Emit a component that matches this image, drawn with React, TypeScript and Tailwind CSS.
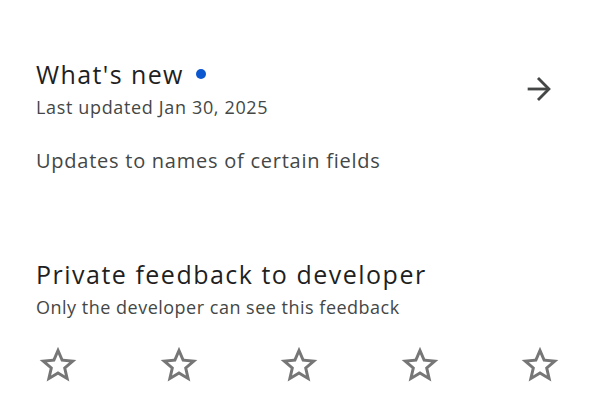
import React from "react";

const font = { fontFamily: "'Open Sans', Roboto, sans-serif" };

const StarOutline = () => (
  <svg viewBox="0 0 24 24" className="w-[44px] h-[44px]" fill="#767676">
    <path d="M22 9.24l-7.19-.62L12 2 9.19 8.63 2 9.24l5.46 4.73L5.82 21 12 17.27 18.18 21l-1.63-7.03L22 9.24zM12 15.4l-3.76 2.27 1-4.28-3.32-2.88 4.38-.38L12 6.1l1.71 4.04 4.38.38-3.32 2.88 1 4.28L12 15.4z" />
  </svg>
);

const ArrowRight = () => (
  <svg viewBox="0 0 24 24" className="w-[34px] h-[34px]" fill="none" stroke="#444746" strokeWidth="2" strokeLinecap="square">
    <path d="M5 12h13" />
    <path d="M12 5l7 7-7 7" />
  </svg>
);

export default function App() {
  return (
    <div className="w-[600px] h-[403px] bg-white overflow-hidden pl-9 pr-[44px] pt-[58px]" style={font}>
      <div className="flex items-center justify-between">
        <div>
          <div className="flex items-center gap-[12px]">
            <h2 className="text-[25px] leading-[32px] tracking-[1.4px] text-[#1f1f1f]">What's new</h2>
            <span className="w-[10px] h-[10px] rounded-full bg-[#0b57d0]" />
          </div>
          <p className="mt-[5px] text-[18px] leading-[24px] tracking-[0.65px] text-[#444746]">Last updated Jan 30, 2025</p>
        </div>
        <ArrowRight />
      </div>

      <p className="mt-[28px] text-[20px] leading-[28px] tracking-[0.75px] text-[#444746]">Updates to names of certain fields</p>

      <h2 className="mt-[83px] text-[25px] leading-[32px] tracking-[1.5px] text-[#1f1f1f]">Private feedback to developer</h2>
      <p className="mt-[5px] text-[18px] leading-[24px] tracking-[0.5px] text-[#444746]">Only the developer can see this feedback</p>

      <div className="mt-[24px] flex justify-between w-[526px]">
        <StarOutline />
        <StarOutline />
        <StarOutline />
        <StarOutline />
        <StarOutline />
      </div>
    </div>
  );
}
